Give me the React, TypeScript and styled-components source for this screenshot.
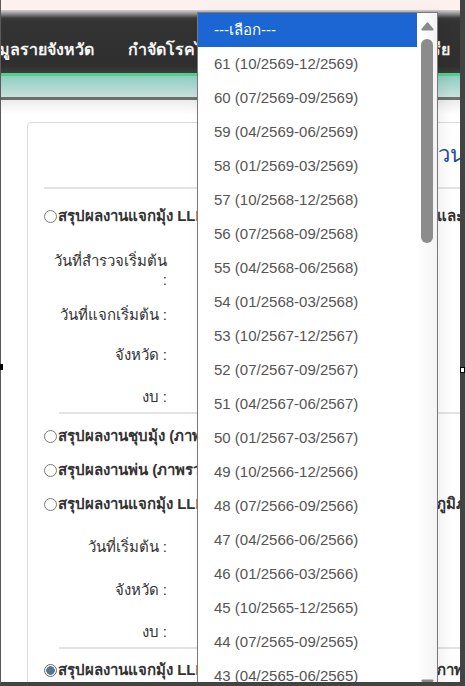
import React from "react";
import styled, { createGlobalStyle } from "styled-components";

const GlobalStyle = createGlobalStyle`
  html, body {
    margin: 0;
    padding: 0;
  }
  body {
    width: 465px;
    height: 686px;
    overflow: hidden;
    background: #fff;
    font-family: "Liberation Sans", "Noto Sans", sans-serif;
  }
`;

const Screen = styled.div`
  position: relative;
  width: 465px;
  height: 686px;
`;

const Frame = styled.div`
  position: relative;
  width: 465px;
  height: 686px;
  box-sizing: border-box;
  border-left: 1px solid #5a5a5a;
  border-right: 5px solid #434343;
  border-bottom: 4px solid #434343;
  overflow: hidden;
  background: #fff;
`;

const TopStrip = styled.div`
  height: 10px;
  background: #fcf1ef;
`;

const NavBar = styled.div`
  height: 63px;
  box-sizing: border-box;
  padding-top: 15px;
  display: flex;
  align-items: center;
  white-space: nowrap;
  background: linear-gradient(#d2d2d2 0, #8c8c8c 4px, #3c3c3c 8px, #333 12px, #2f2f2f 56px, #3e3e3e 63px);
`;

const NavList = styled.div`
  display: flex;
  margin-left: -40px;
`;

const NavItem = styled.span`
  color: #f4f4f4;
  font-weight: bold;
  font-size: 16px;
  padding: 0 17px;
`;

const Ribbon = styled.div`
  height: 27px;
  box-sizing: border-box;
  border-top: 3px solid #52cf8f;
  border-bottom: 3px solid #6e6e6e;
  background: linear-gradient(#8fcec2, #c6e2de);
`;

const Main = styled.div`
  padding: 22px 0 0 26px;
  background: linear-gradient(#ebebeb, #fff 14px);
`;

const Card = styled.div`
  width: 1000px;
  border: 1px solid #dcdcdc;
  border-radius: 4px;
  padding: 0 16px;
  background: #fff;
`;

const Heading = styled.h2`
  margin: 0;
  height: 64px;
  line-height: 64px;
  padding-left: 178px;
  font-size: 22px;
  font-weight: normal;
  color: #234a9b;
  white-space: nowrap;
`;

const Divider = styled.div<{ $indent?: number; $after?: number }>`
  height: 2px;
  background: #e3e3e3;
  margin-left: ${(p) => p.$indent ?? 0}px;
  margin-bottom: ${(p) => p.$after ?? 0}px;
`;

const RadioRow = styled.label`
  display: flex;
  align-items: center;
  height: 34px;
  font-size: 15px;
  font-weight: bold;
  color: #333;
  white-space: nowrap;
`;

const Radio = styled.span<{ $checked?: boolean }>`
  width: 13px;
  height: 13px;
  box-sizing: border-box;
  border-radius: 50%;
  border: 1px solid ${(p) => (p.$checked ? "#6a6a6a" : "#7b7b7b")};
  background: ${(p) =>
    p.$checked ? "radial-gradient(circle, #587590 0 4px, #fff 4.6px)" : "#fff"};
  margin-right: 1px;
  flex: none;
`;

const Form = styled.div<{ $top: number }>`
  padding: ${(p) => p.$top}px 0 6px;
`;

const FormRow = styled.div<{ $h: number }>`
  display: flex;
  align-items: flex-start;
  height: ${(p) => p.$h}px;
`;

const Label = styled.div`
  width: 123px;
  text-align: right;
  font-size: 15px;
  line-height: 19px;
  color: #333;
`;

const Dropdown = styled.div`
  position: absolute;
  left: 196px;
  top: 12px;
  width: 241px;
  height: 686px;
  box-sizing: border-box;
  border: 1px solid #7a7a7a;
  background: #fff;
  display: flex;
  box-shadow: 4px 2px 12px rgba(0, 0, 0, 0.07);
`;

const OptionList = styled.ul`
  flex: 1;
  margin: 0;
  padding: 0;
  list-style: none;
`;

const Option = styled.li<{ $selected?: boolean }>`
  height: 34px;
  line-height: 34px;
  padding-left: 16px;
  font-size: 15px;
  color: ${(p) => (p.$selected ? "#fff" : "#555")};
  background: ${(p) => (p.$selected ? "#1b66d2" : "transparent")};
  white-space: nowrap;
`;

const Scrollbar = styled.div`
  width: 20px;
  display: flex;
  flex-direction: column;
  align-items: center;
  padding: 9px 0;
  box-sizing: border-box;
  background: linear-gradient(90deg, #fff, #f3f3f3);
`;

const Thumb = styled.div`
  width: 12px;
  height: 204px;
  margin-top: 8px;
  border-radius: 6px;
  background: #8c8c8c;
`;

const Spacer = styled.div`
  flex: 1;
`;

const Handle = styled.span<{ $x: number; $y: number; $dark?: boolean }>`
  position: absolute;
  left: ${(p) => p.$x}px;
  top: ${(p) => p.$y}px;
  width: 5px;
  height: 6px;
  box-sizing: border-box;
  border: 1px solid #000;
  background: ${(p) => (p.$dark ? "#000" : "#fff")};
`;

function Arrow({ down }: { down?: boolean }) {
  return (
    <svg width="13" height="9" viewBox="0 0 13 9">
      <polygon
        points={down ? "1.5,1.5 11.5,1.5 6.5,7.5" : "1.5,7.5 11.5,7.5 6.5,1.5"}
        fill="#8a8a8a"
        stroke="#8a8a8a"
        strokeWidth="2.2"
        strokeLinejoin="round"
      />
    </svg>
  );
}

const quarters = ["10", "07", "04", "01"];
const ends = ["12", "09", "06", "03"];

const options = Array.from({ length: 19 }, (_, i) => {
  const n = 61 - i;
  const q = (61 - n) % 4;
  const year = 2569 - Math.floor((61 - n) / 4);
  return `${n} (${quarters[q]}/${year}-${ends[q]}/${year})`;
});

export default function App() {
  return (
    <Screen>
      <GlobalStyle />
      <Frame>
        <TopStrip />
        <NavBar>
          <NavList>
            <NavItem>ข้อมูลรายจังหวัด</NavItem>
            <NavItem>กำจัดโรคไข้มาลาเรีย</NavItem>
            <NavItem>ความรู้โรคมาลาเรีย</NavItem>
          </NavList>
        </NavBar>
        <Ribbon />
        <Main>
          <Card>
            <Heading>รายงานผลดำเนินงานส่วนกลาง</Heading>
            <Divider $after={10} />

            <RadioRow>
              <Radio />
              สรุปผลงานแจกมุ้ง LLINs (ภาพรวมประเทศ) สำรวจการแจกและการใช้มุ้ง
            </RadioRow>
            <Form $top={18}>
              <FormRow $h={54}>
                <Label>
                  วันที่สำรวจเริ่มต้น
                  <br />:
                </Label>
              </FormRow>
              <FormRow $h={40}>
                <Label>วันที่แจกเริ่มต้น :</Label>
              </FormRow>
              <FormRow $h={42}>
                <Label>จังหวัด :</Label>
              </FormRow>
              <FormRow $h={19}>
                <Label>งบ :</Label>
              </FormRow>
            </Form>
            <Divider $indent={15} $after={5} />

            <RadioRow>
              <Radio />
              สรุปผลงานชุบมุ้ง (ภาพรวม)
            </RadioRow>
            <RadioRow>
              <Radio />
              สรุปผลงานพ่น (ภาพรวม)
            </RadioRow>
            <RadioRow>
              <Radio />
              สรุปผลงานแจกมุ้ง LLINs (ภาพรวมประเทศ) การสำรวจและภูมิภาค
            </RadioRow>
            <Form $top={16}>
              <FormRow $h={43}>
                <Label>วันที่เริ่มต้น :</Label>
              </FormRow>
              <FormRow $h={42}>
                <Label>จังหวัด :</Label>
              </FormRow>
              <FormRow $h={19}>
                <Label>งบ :</Label>
              </FormRow>
            </Form>
            <Divider $indent={15} $after={4} />

            <RadioRow>
              <Radio $checked />
              สรุปผลงานแจกมุ้ง LLINs (ภาพรวมประเทศ) การสำรวจและภาพรวมรายไตรมาส
            </RadioRow>
          </Card>
        </Main>

        <Dropdown>
          <OptionList>
            <Option $selected>---เลือก---</Option>
            {options.map((o) => (
              <Option key={o}>{o}</Option>
            ))}
          </OptionList>
          <Scrollbar>
            <Arrow />
            <Thumb />
            <Spacer />
            <Arrow down />
          </Scrollbar>
        </Dropdown>
      </Frame>
      <Handle $x={-2} $y={364} $dark />
      <Handle $x={460} $y={367} />
    </Screen>
  );
}
